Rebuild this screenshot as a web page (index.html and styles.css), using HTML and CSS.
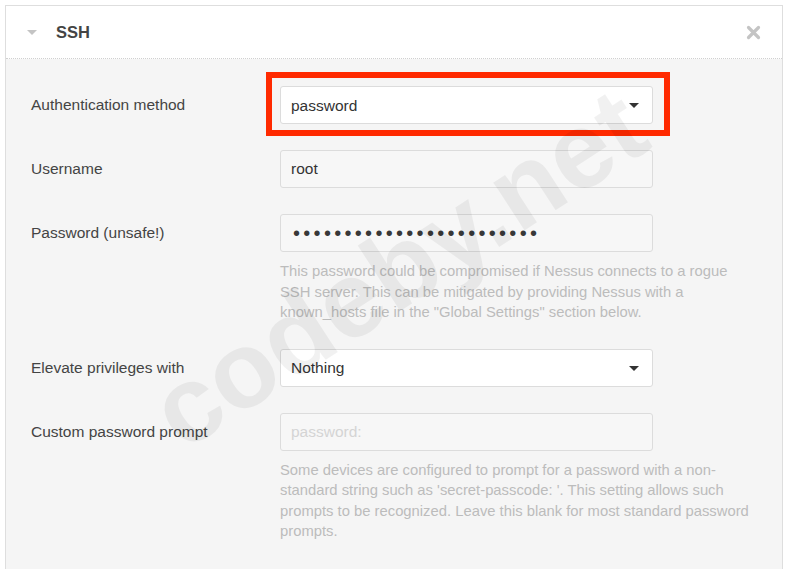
FILE: index.html
```html
<!DOCTYPE html>
<html lang="en">
<head>
  <meta charset="UTF-8" />
  <title>SSH credentials</title>
  <link rel="stylesheet" href="styles.css">
</head>
<body>

  <div class="panel">
    <!-- header -->
    <div class="panel-head">
      <span class="toggle"></span>
      <span class="title">SSH</span>
      <svg class="close" width="15" height="15" viewBox="0 0 15 15">
        <path d="M2.5 2.5 L12.5 12.5 M12.5 2.5 L2.5 12.5" stroke="#c4c4c4" stroke-width="3.2" stroke-linecap="round" fill="none" />
      </svg>
    </div>

    <div class="panel-body">
      <div class="row">
        <label class="label">Authentication method</label>
        <div class="control">
          <div class="select-wrap">
            <select class="field select">
              <option>password</option>
            </select>
          </div>
          <div class="highlight"></div>
        </div>
      </div>

      <div class="row">
        <label class="label">Username</label>
        <div class="control">
          <input class="field" type="text" value="root" />
        </div>
      </div>

      <div class="row">
        <label class="label">Password (unsafe!)</label>
        <div class="control">
          <input class="field secret" type="password" value="passwordpasswordpassword" />
          <p class="help">This password could be compromised if Nessus connects to a rogue SSH server. This can be mitigated by providing Nessus with a known_hosts file in the "Global Settings" section below.</p>
        </div>
      </div>

      <div class="row">
        <label class="label">Elevate privileges with</label>
        <div class="control">
          <div class="select-wrap">
            <select class="field select">
              <option>Nothing</option>
            </select>
          </div>
        </div>
      </div>

      <div class="row">
        <label class="label">Custom password prompt</label>
        <div class="control">
          <input class="field" type="text" placeholder="password:" />
          <p class="help">Some devices are configured to prompt for a password with a non-standard string such as 'secret-passcode: '. This setting allows such prompts to be recognized. Leave this blank for most standard password prompts.</p>
        </div>
      </div>
    </div>

    <div class="watermark">codeby.net</div>
  </div>

</body>
</html>
```
FILE: styles.css
```css
body {
  font-family: 'Liberation Sans', Arial, sans-serif;
  background-color: white;
  margin: 0;
  overflow: hidden;
}

.panel {
  position: relative;
  margin: 5px 0 0 5px;
  width: 776px;
  height: 600px;
  border: 1px solid #dedede;
  overflow: hidden;
}

.panel-head {
  display: flex;
  align-items: center;
  height: 52px;
  padding: 0 21px 0 20px;
  background-color: white;
  border-bottom: 1px dotted #d0d0d0;
}

.toggle {
  width: 0;
  height: 0;
  border-left: 5px solid transparent;
  border-right: 5px solid transparent;
  border-top: 5px solid #c4c4c4;
  margin-left: 1px;
  margin-right: 19px;
}

.title {
  flex: 1;
  font-size: 16.5px;
  font-weight: bold;
  color: #444;
}

.panel-body {
  background-color: #f5f5f5;
  height: 100%;
  padding: 27px 0 0 25px;
}

.row {
  display: grid;
  grid-template-columns: 249px 474px;
  margin-bottom: 26px;
}

.label {
  font-size: 15.5px;
  line-height: 38px;
  color: #444;
}

.control {
  position: relative;
}

.field {
  box-sizing: border-box;
  display: block;
  width: 373px;
  height: 38px;
  margin: 0;
  padding: 0 10px;
  font-family: inherit;
  font-size: 15.5px;
  color: #333;
  background-color: #f7f7f7;
  border: 1px solid #dcdcdc;
  border-radius: 3px;
  outline: none;
}

.field::placeholder {
  color: #d4d4d4;
}

.secret {
  padding-left: 12px;
  font-size: 20px;
  letter-spacing: 3.3px;
  color: #383838;
}

.select-wrap {
  position: relative;
  width: 373px;
}

.select {
  appearance: none;
  -webkit-appearance: none;
  background-color: white;
}

.select-wrap::after {
  content: "";
  position: absolute;
  right: 14px;
  top: 17px;
  border-left: 5px solid transparent;
  border-right: 5px solid transparent;
  border-top: 5px solid #333;
  pointer-events: none;
}

.highlight {
  position: absolute;
  left: -14px;
  top: -14px;
  width: 392px;
  height: 52px;
  border: 6px solid #ff2a00;
  pointer-events: none;
}

.help {
  margin: 9px 0 0;
  font-size: 14.8px;
  line-height: 20.5px;
  color: #bcbcbc;
}

.watermark {
  position: absolute;
  left: 392px;
  top: 262px;
  transform: translate(-50%, -50%) rotate(-33deg);
  font-size: 108px;
  font-weight: bold;
  color: rgba(0, 0, 0, 0.055);
  white-space: nowrap;
  pointer-events: none;
}
```
